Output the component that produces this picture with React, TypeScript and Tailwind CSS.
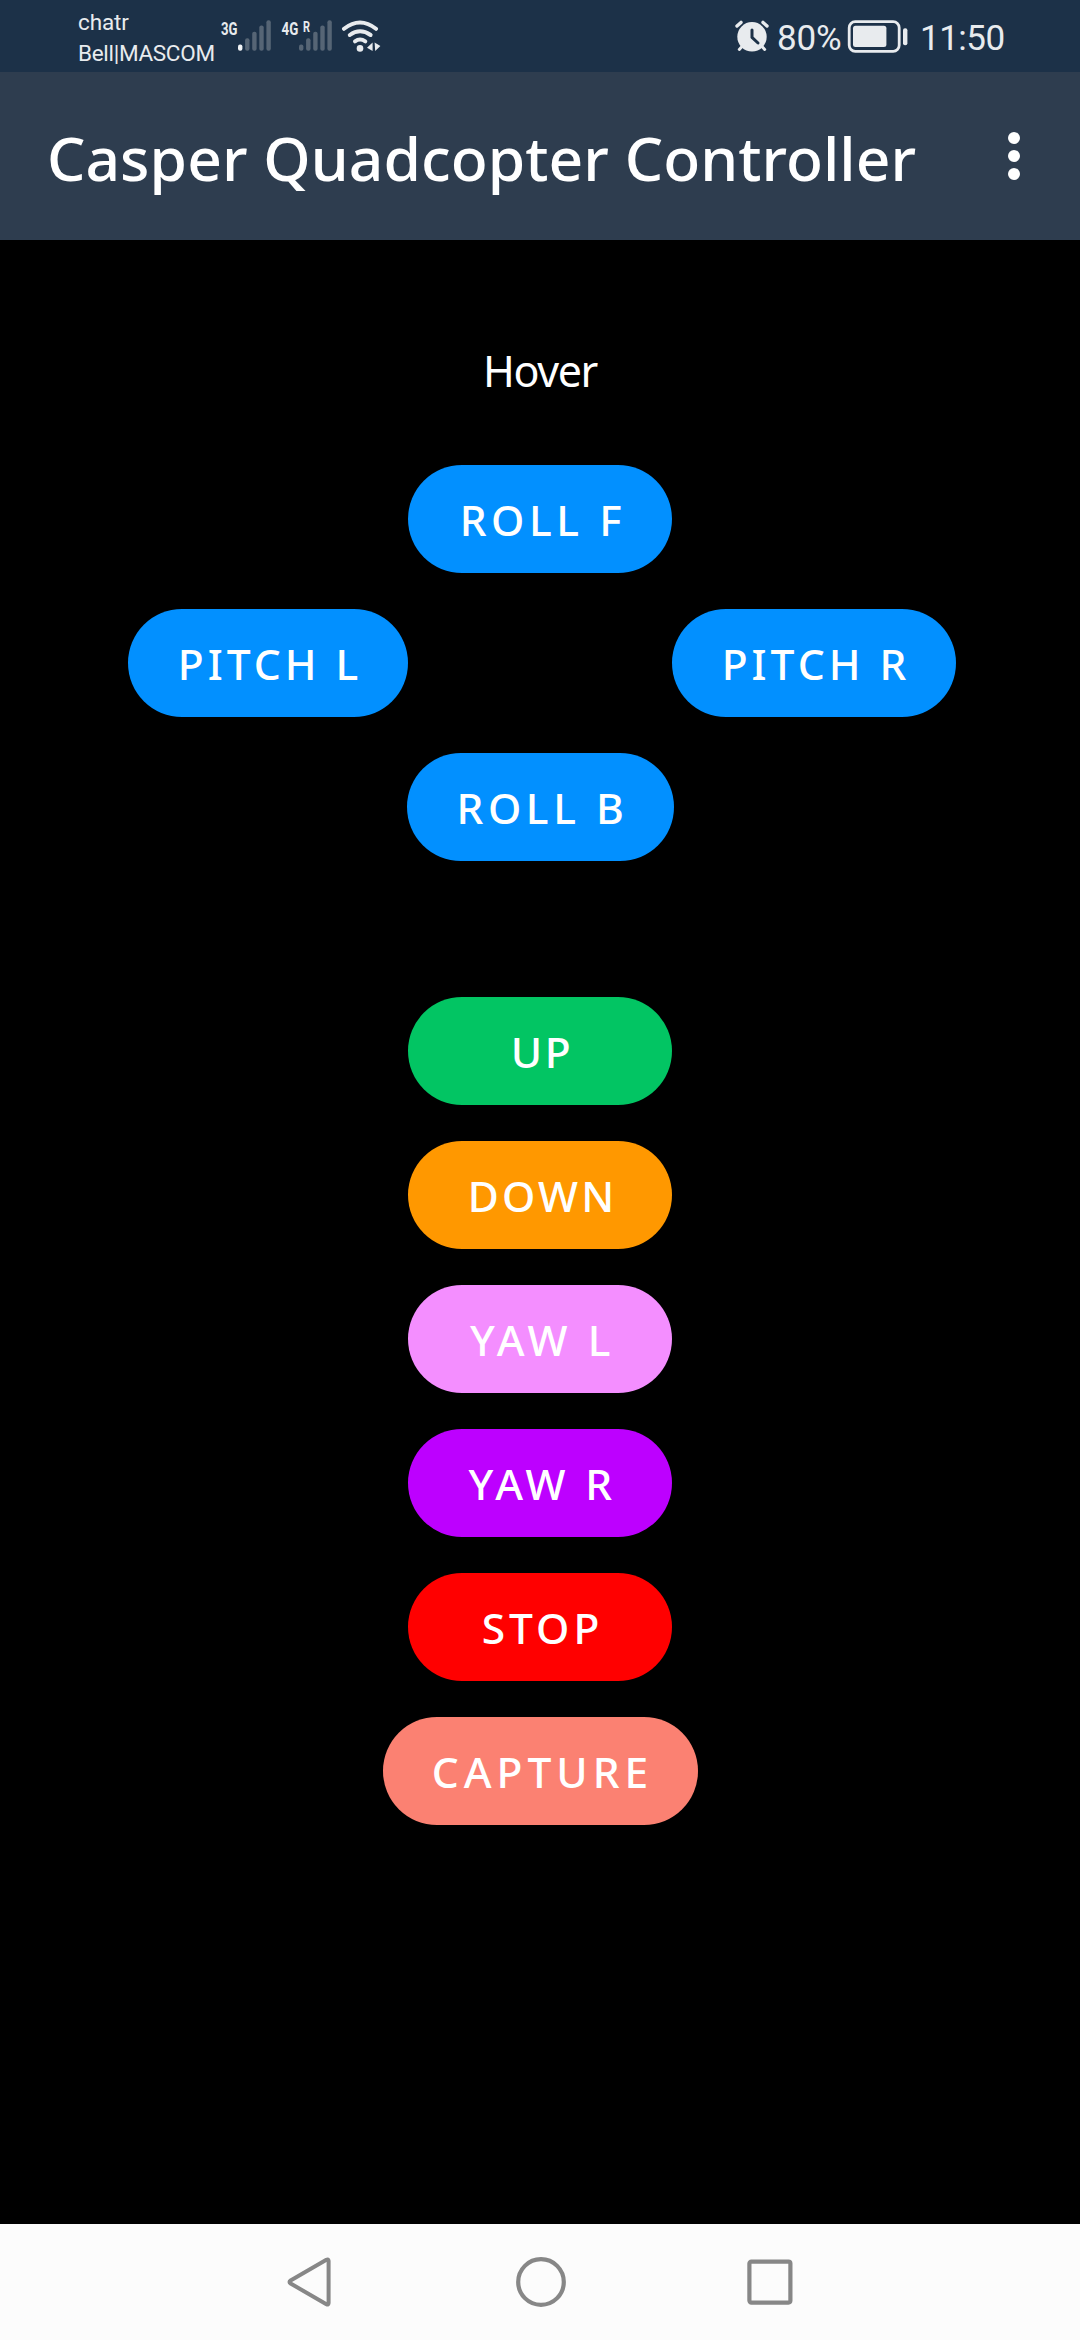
import { useState } from 'react';

type Command = { label: string; style: string; text: string };

const flight: Command[] = [
  { label: 'UP', style: 'w-[264px] bg-[#02c563]', text: 'tracking-[2.6px] pl-[4px]' },
  { label: 'DOWN', style: 'w-[264px] bg-[#ff9800]', text: 'tracking-[3.2px] pl-[5px]' },
  { label: 'YAW L', style: 'w-[264px] bg-[#f48eff]', text: 'tracking-[4.6px] pl-[5px]' },
  { label: 'YAW R', style: 'w-[264px] bg-[#bd00ff]', text: 'tracking-[4.3px] pl-[5px]' },
  { label: 'STOP', style: 'w-[264px] bg-[#ff0000]', text: 'tracking-[4px] pl-[5px]' },
  { label: 'CAPTURE', style: 'w-[315px] bg-[#fb8172]', text: 'tracking-[5px] pl-[5px]' },
];

function Pill({ label, style, text, onPress }: Command & { onPress: (label: string) => void }) {
  return (
    <button
      onClick={() => onPress(label)}
      className={`flex h-[108px] shrink-0 items-center justify-center rounded-full pt-[2px] text-[42.5px] leading-none font-medium whitespace-pre text-white ${style}`}
    >
      <span className={text}>{label}</span>
    </button>
  );
}

function SignalBars({ active }: { active: boolean }) {
  return (
    <svg className="h-[31px] w-[33px]" viewBox="0 0 33 31">
      <rect x="0" y="24.5" width="4.4" height="6.3" rx="2" fill={active ? '#f2f4f6' : '#566575'} />
      <rect x="7.1" y="18.2" width="4.4" height="12.6" rx="2" fill="#566575" />
      <rect x="14.2" y="11.8" width="4.4" height="19" rx="2" fill="#566575" />
      <rect x="21.3" y="5.6" width="4.4" height="25.2" rx="2" fill="#566575" />
      <rect x="28.4" y="0.2" width="4.4" height="30.6" rx="2" fill="#566575" />
    </svg>
  );
}

function StatusBar() {
  return (
    <div className="flex h-[72px] items-start bg-[#1c3148] pl-[78px] font-['Roboto',sans-serif] text-[#e8ebee]">
      <div className="w-[143px] pt-[7px] text-[22.5px] leading-[31px] whitespace-nowrap">
        <div className="tracking-[-0.1px]">chatr</div>
        <div className="tracking-[-0.3px]">Bell|MASCOM</div>
      </div>
      <svg className="mt-[14px] h-[30px] w-[17px] overflow-visible" viewBox="0 -6 17 30">
        <text x="0" y="14.5" fontSize="19" fontWeight="700" fill="currentColor" textLength="16.5" lengthAdjust="spacingAndGlyphs">3G</text>
      </svg>
      <div className="mt-[20px]"><SignalBars active /></div>
      <svg className="mt-[14px] ml-[10px] h-[30px] w-[30px] overflow-visible" viewBox="0 -6 30 30">
        <text x="0.5" y="14.5" fontSize="19" fontWeight="700" fill="currentColor" textLength="16.7" lengthAdjust="spacingAndGlyphs">4G</text>
        <text x="22" y="11.7" fontSize="14" fontWeight="700" fill="currentColor" textLength="7" lengthAdjust="spacingAndGlyphs">R</text>
      </svg>
      <div className="mt-[20px] -ml-[12px]"><SignalBars active={false} /></div>
      <svg className="mt-[18px] ml-[9px] h-[36px] w-[42px]" viewBox="340 18 42 36" fill="none" stroke="#e8ebee" strokeWidth="4" strokeLinecap="round">
        <path d="M343 28.8Q359 16.2 375 28.8" />
        <path d="M348.8 35Q359 27.5 369.6 35" />
        <path d="M354 41.3Q359 37.8 364.3 41.3" />
        <circle cx="359" cy="48.4" r="3.3" fill="#e8ebee" stroke="none" />
        <path d="M366 47.7L371.6 42.4V51Z M373.6 42.4L379.4 46L374.2 51Z" fill="#e8ebee" stroke="none" />
      </svg>
      <svg className="mt-[18px] ml-auto h-[36px] w-[36px]" viewBox="733 18 36 36" fill="none" strokeLinecap="round">
        <circle cx="751" cy="36.8" r="14.7" fill="#e8ebee" />
        <path d="M736 26L740 22.4M762 22.4L766 26" stroke="#e8ebee" strokeWidth="3.4" />
        <path d="M741 46.5L738.3 49.4M761 46.5L763.7 49.4" stroke="#e8ebee" strokeWidth="3" />
        <path d="M751 30V37.4L757 43" stroke="#1c3148" strokeWidth="3" strokeLinejoin="round" />
      </svg>
      <div className="ml-[7px] w-[70px] pt-[21px] text-[35px] leading-[35px] tracking-[-0.2px]">80%</div>
      <svg className="mt-[18px] h-[36px] w-[62px]" viewBox="846 18 62 36">
        <rect x="848.2" y="21.7" width="50" height="29.6" rx="6" fill="none" stroke="#e8ebee" strokeWidth="2.8" />
        <rect x="852" y="25.7" width="33.4" height="21.2" rx="2.5" fill="#e8ebee" />
        <rect x="902" y="28.3" width="4.4" height="17" rx="2" fill="#e8ebee" />
      </svg>
      <div className="ml-[11px] w-[160px] pt-[21px] text-[35px] leading-[35px] tracking-[-0.5px]">11:50</div>
    </div>
  );
}

export default function App() {
  const [status, setStatus] = useState('Hover');
  return (
    <div className="flex h-[2340px] w-[1080px] flex-col overflow-hidden bg-black font-['Noto_Sans',sans-serif]">
      <StatusBar />
      <header className="flex h-[168px] items-center justify-between bg-[#2e3d4f] pr-[60px] pl-[47px] text-white">
        <h1 className="pt-[5px] text-[60.5px] leading-none font-medium tracking-[0.05px] whitespace-nowrap">Casper Quadcopter Controller</h1>
        <button aria-label="Menu" className="flex flex-col gap-[6px]">
          <i className="size-3 rounded-full bg-white" />
          <i className="size-3 rounded-full bg-white" />
          <i className="size-3 rounded-full bg-white" />
        </button>
      </header>
      <main className="flex flex-1 flex-col items-center">
        <p className="mt-[106px] h-[119px] text-[43px] leading-[50px] tracking-[-1.4px] text-white">{status}</p>
        <div className="flex flex-col items-center gap-9">
          <Pill label="ROLL F" style="w-[264px] bg-[#0290ff]" text="tracking-[4.6px] pl-[6px]" onPress={setStatus} />
          <div className="flex translate-x-[2px] gap-[264px]">
            <Pill label="PITCH L" style="w-[280px] bg-[#0290ff]" text="tracking-[4px] pl-[4px]" onPress={setStatus} />
            <Pill label="PITCH R" style="w-[284px] bg-[#0290ff]" text="tracking-[4px] pl-[4px]" onPress={setStatus} />
          </div>
          <Pill label="ROLL B" style="w-[267px] bg-[#0290ff]" text="tracking-[4.6px] pl-[5px]" onPress={setStatus} />
        </div>
        <div className="mt-[136px] flex flex-col items-center gap-9">
          {flight.map((c) => (
            <Pill key={c.label} {...c} onPress={setStatus} />
          ))}
        </div>
      </main>
      <nav className="flex h-[116px] items-center justify-center gap-[181px] bg-[#fcfcfc] text-[#878787]">
        <svg className="h-[50px] w-[48px]" viewBox="0 0 48 50" fill="none" stroke="currentColor" strokeWidth="4" strokeLinejoin="round">
          <path d="M41.6 4V46Q41.4 48.2 39.4 47.2L3.6 26.5Q1.4 25 3.6 23.5L39.4 2.8Q41.4 1.8 41.6 4Z" />
        </svg>
        <svg className="size-[50px]" viewBox="0 0 50 50" fill="none" stroke="currentColor" strokeWidth="4.2">
          <circle cx="25" cy="25" r="22.8" />
        </svg>
        <svg className="h-[50px] w-[46px]" viewBox="0 0 46 50" fill="none" stroke="currentColor" strokeWidth="4.2">
          <rect x="2.4" y="4.6" width="41" height="41" rx="2" />
        </svg>
      </nav>
    </div>
  );
}
